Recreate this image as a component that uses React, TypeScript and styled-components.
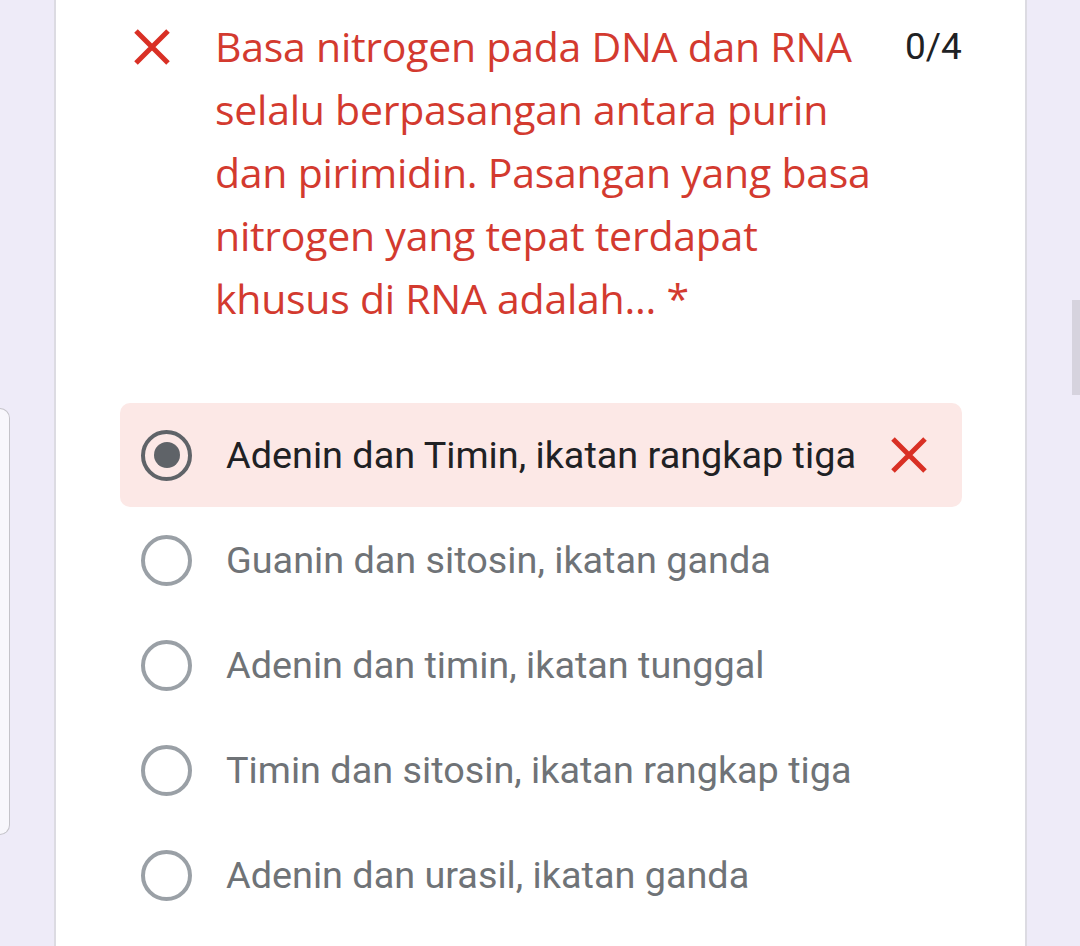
import React from "react";
import styled, { createGlobalStyle } from "styled-components";

const Global = createGlobalStyle`
  html, body { margin: 0; padding: 0; }
  body { background: #eeebf8; overflow: hidden; }
`;

const Page = styled.div`
  display: flex;
  width: 1080px;
  height: 946px;
  background: #eeebf8;
`;

const SideStub = styled.div`
  width: 10px;
  height: 427px;
  margin-top: 408px;
  box-sizing: border-box;
  background: #f8f7fc;
  border: 1.5px solid #c4c3c9;
  border-left: none;
  border-radius: 0 12px 12px 0;
  flex-shrink: 0;
`;

const Card = styled.div`
  margin-left: 44px;
  width: 973px;
  height: 946px;
  box-sizing: border-box;
  background: #ffffff;
  border-left: 2px solid #dcdbe2;
  border-right: 2px solid #dcdbe2;
  padding: 15px 0 0 0;
  flex-shrink: 0;
`;

const Header = styled.div`
  display: flex;
  align-items: flex-start;
  padding-left: 77px;
`;

const HeadIcon = styled.div`
  width: 38px;
  height: 38px;
  margin-top: 13px;
  margin-right: 44px;
  flex-shrink: 0;
`;

const Title = styled.div`
  width: 690px;
  font-family: "Open Sans", "Noto Sans", sans-serif;
  font-size: 41px;
  line-height: 63px;
  color: #d33a2f;
  letter-spacing: -0.25px;
  white-space: nowrap;
`;

const Score = styled.div`
  font-family: Roboto, "Noto Sans", sans-serif;
  font-size: 37px;
  line-height: 63px;
  color: #202124;
`;

const Options = styled.div`
  display: flex;
  flex-direction: column;
  gap: 1px;
  margin: 73px 0 0 64px;
  width: 842px;
`;

const Row = styled.div<{ $wrong?: boolean }>`
  display: flex;
  align-items: center;
  height: 104px;
  box-sizing: border-box;
  padding: 0 34px 0 21px;
  border-radius: 10px;
  background: ${(p) => (p.$wrong ? "#fce8e6" : "transparent")};
`;

const Radio = styled.div<{ $checked?: boolean }>`
  width: 51px;
  height: 51px;
  box-sizing: border-box;
  border-radius: 50%;
  border: 4.5px solid ${(p) => (p.$checked ? "#5f6368" : "#9aa0a6")};
  display: flex;
  align-items: center;
  justify-content: center;
  flex-shrink: 0;
  &::after {
    content: "";
    display: ${(p) => (p.$checked ? "block" : "none")};
    width: 26px;
    height: 26px;
    border-radius: 50%;
    background: #5f6368;
  }
`;

const Label = styled.div<{ $checked?: boolean }>`
  flex: 1;
  margin-left: 34px;
  font-family: Roboto, "Noto Sans", sans-serif;
  font-size: 37.8px;
  color: ${(p) => (p.$checked ? "#202124" : "#6f7377")};
  white-space: nowrap;
`;

const RowIcon = styled.div`
  width: 38px;
  height: 38px;
  flex-shrink: 0;
`;

const ScrollArea = styled.div`
  flex: 1;
  display: flex;
  justify-content: flex-end;
`;

const Thumb = styled.div`
  width: 8px;
  height: 95px;
  margin-top: 300px;
  background: #d6d3de;
`;

const Cross = () => (
  <svg width="38" height="38" viewBox="0 0 38 38">
    <path d="M3 3 L35 35 M35 3 L3 35" stroke="#d93025" strokeWidth="5" fill="none" />
  </svg>
);

const options = [
  "Adenin dan Timin, ikatan rangkap tiga",
  "Guanin dan sitosin, ikatan ganda",
  "Adenin dan timin, ikatan tunggal",
  "Timin dan sitosin, ikatan rangkap tiga",
  "Adenin dan urasil, ikatan ganda",
];

export default function App() {
  return (
    <Page>
      <Global />
      <SideStub />
      <Card>
        <Header>
          <HeadIcon>
            <Cross />
          </HeadIcon>
          <Title>
            Basa nitrogen pada DNA dan RNA
            <br />
            selalu berpasangan antara purin
            <br />
            dan pirimidin. Pasangan yang basa
            <br />
            nitrogen yang tepat terdapat
            <br />
            khusus di RNA adalah... *
          </Title>
          <Score>0/4</Score>
        </Header>
        <Options>
          {options.map((o, i) => (
            <Row key={o} $wrong={i === 0}>
              <Radio $checked={i === 0} />
              <Label $checked={i === 0}>{o}</Label>
              {i === 0 && (
                <RowIcon>
                  <Cross />
                </RowIcon>
              )}
            </Row>
          ))}
        </Options>
      </Card>
      <ScrollArea>
        <Thumb />
      </ScrollArea>
    </Page>
  );
}
